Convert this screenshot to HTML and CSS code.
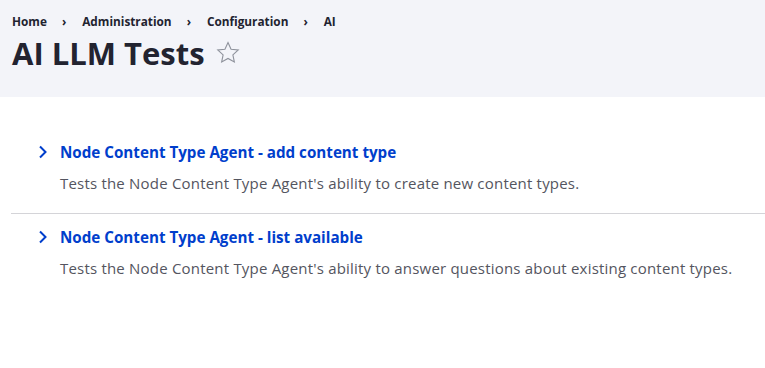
FILE: index.html
```html
<!DOCTYPE html>
<html lang="en">
<head>
<meta charset="utf-8">
<title>AI LLM Tests</title>
<link rel="stylesheet" href="styles.css">
</head>
<body>
<header class="page-header">
  <nav class="breadcrumb" aria-label="Breadcrumb">
    <ol class="breadcrumb-list">
      <li class="breadcrumb-item"><a href="#">Home</a></li>
      <li class="breadcrumb-item"><a href="#">Administration</a></li>
      <li class="breadcrumb-item"><a href="#">Configuration</a></li>
      <li class="breadcrumb-item"><a href="#">AI</a></li>
    </ol>
  </nav>
  <div class="title-row">
    <h1 class="page-title">AI LLM Tests</h1>
    <button class="shortcut" type="button" aria-label="Add to shortcuts">
      <svg width="24" height="24" viewBox="0 0 24 24" aria-hidden="true"><path d="M12 1.6l3.05 6.6 7.2.82-5.36 4.9 1.47 7.1L12 17.42 5.64 21.02l1.47-7.1L1.750 9.02l7.2-.82z" fill="none" stroke="#8e929c" stroke-width="1.1" stroke-linejoin="miter"/></svg>
    </button>
  </div>
</header>
<main class="content">
  <ul class="admin-list">
    <li class="admin-item">
      <a class="admin-link" href="#">
        <svg class="chevron" width="10" height="14" viewBox="0 0 10 14" aria-hidden="true"><path d="M2 1.5l5.5 5.5L2 12.5" fill="none" stroke="#003ecc" stroke-width="2"/></svg>
        <span>Node Content Type Agent - add content type</span>
      </a>
      <p class="admin-desc">Tests the Node Content Type Agent's ability to create new content types.</p>
    </li>
    <li class="admin-item">
      <a class="admin-link" href="#">
        <svg class="chevron" width="10" height="14" viewBox="0 0 10 14" aria-hidden="true"><path d="M2 1.5l5.5 5.5L2 12.5" fill="none" stroke="#003ecc" stroke-width="2"/></svg>
        <span>Node Content Type Agent - list available</span>
      </a>
      <p class="admin-desc">Tests the Node Content Type Agent's ability to answer questions about existing content types.</p>
    </li>
  </ul>
</main>
</body>
</html>
```
FILE: styles.css
```css
* { box-sizing: border-box; }
html, body { margin: 0; padding: 0; }
body {
  font-family: "Open Sans", "Noto Sans", sans-serif;
  color: #222330;
  background: #fff;
}
.page-header {
  background: #f3f4f9;
  height: 97px;
  padding: 13px 12px 0;
}
.breadcrumb-list {
  list-style: none;
  margin: 0;
  padding: 0;
  display: flex;
  font-size: 11.8px;
  font-weight: 700;
  line-height: 16px;
}
.breadcrumb-item a { color: #222330; text-decoration: none; }
.breadcrumb-item + .breadcrumb-item::before {
  content: "›";
  display: inline-block;
  padding: 0 16px 0 15px;
  font-weight: 700;
}
.title-row {
  display: flex;
  align-items: center;
  margin-top: 2px;
}
.page-title {
  margin: 0;
  font-size: 31px;
  line-height: 44px;
  font-weight: 700;
  color: #222330;
}
.shortcut {
  border: 0;
  background: none;
  padding: 0;
  margin-left: 11px;
  display: flex;
}
.content { padding: 0 0 0 11px; }
.admin-list {
  list-style: none;
  margin: 0;
  padding: 40px 0 0;
}
.admin-item {
  padding: 4px 0 0 27px;
  height: 76px;
}
.admin-item + .admin-item {
  border-top: 1px solid #d4d4d8;
  height: auto;
  padding-top: 12px;
}
.admin-link {
  display: flex;
  align-items: center;
  gap: 12px;
  color: #003ecc;
  font-weight: 700;
  font-size: 15.2px;
  line-height: 22px;
  text-decoration: none;
}
.admin-desc {
  margin: 9px 0 0 22px;
  font-size: 15px;
  letter-spacing: 0.2px;
  line-height: 22px;
  color: #545560;
}
```
